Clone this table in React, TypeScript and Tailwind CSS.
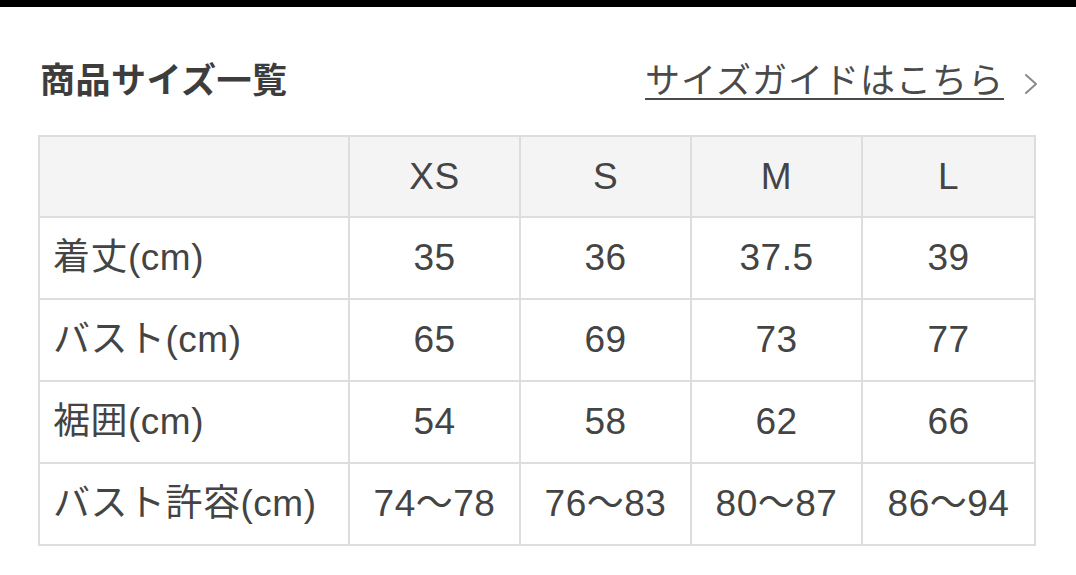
const sizes = ["XS", "S", "M", "L"];

const rows: { label: string; values: string[] }[] = [
  { label: "着丈(cm)", values: ["35", "36", "37.5", "39"] },
  { label: "バスト(cm)", values: ["65", "69", "73", "77"] },
  { label: "裾囲(cm)", values: ["54", "58", "62", "66"] },
  { label: "バスト許容(cm)", values: ["74～78", "76～83", "80～87", "86～94"] },
];

export default function App() {
  return (
    <div
      className="h-[575px] w-[1076px] overflow-hidden bg-white text-[#444]"
      style={{ fontFamily: '"Liberation Sans", "Noto Sans CJK JP", sans-serif' }}
    >
      <div className="h-[7px] bg-black" />
      <div className="pl-[38px] pr-[42px]">
        <div className="mt-[52px] flex h-[44px] items-center justify-between">
          <h2 className="pl-[2px] text-[35px] font-bold tracking-[0.5px] text-[#3d3d3d]">
            商品サイズ一覧
          </h2>
          <a
            href="#"
            className="flex items-center gap-[20px] text-[35px] tracking-[1px] text-[#4a4a4a]"
          >
            <span className="underline decoration-2 underline-offset-[5px]">
              サイズガイドはこちら
            </span>
            <svg
              width="14"
              height="22"
              viewBox="0 0 14 22"
              fill="none"
              className="mr-[-4px] mt-[6px]"
            >
              <path
                d="M2 2 L12 11 L2 20"
                stroke="#8a8a8a"
                strokeWidth="2"
                strokeLinecap="round"
                strokeLinejoin="round"
              />
            </svg>
          </a>
        </div>

        <table className="mt-[32px] w-[996px] table-fixed border-collapse text-[37px] tracking-[0.5px]">
          <colgroup>
            <col className="w-[310px]" />
            <col className="w-[171px]" />
            <col className="w-[171px]" />
            <col className="w-[171px]" />
            <col className="w-[173px]" />
          </colgroup>
          <thead>
            <tr className="bg-[#f4f4f4]">
              <th className="h-[81px] border-2 border-[#dddddd]" />
              {sizes.map((s) => (
                <th
                  key={s}
                  className="h-[81px] border-2 border-[#dddddd] text-center font-normal"
                >
                  {s}
                </th>
              ))}
            </tr>
          </thead>
          <tbody>
            {rows.map((r) => (
              <tr key={r.label}>
                <td className="h-[82px] whitespace-nowrap border-2 border-[#dddddd] pl-[13px]">
                  {r.label}
                </td>
                {r.values.map((v, i) => (
                  <td
                    key={i}
                    className="h-[82px] whitespace-nowrap border-2 border-[#dddddd] text-center"
                  >
                    {v}
                  </td>
                ))}
              </tr>
            ))}
          </tbody>
        </table>
      </div>
    </div>
  );
}
